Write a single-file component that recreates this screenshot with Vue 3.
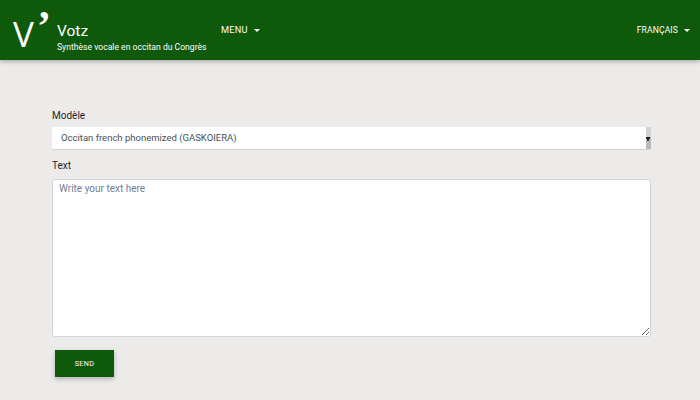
<template>
  <div class="page">
    <header class="topbar">
      <div class="brand">
        <div class="logo">V<span class="apos">’</span></div>
        <div class="brand-text">
          <div class="brand-name">Votz</div>
          <div class="brand-sub">Synthèse vocale en occitan du Congrès</div>
        </div>
      </div>
      <nav class="menu">
        <a class="nav-link">MENU<span class="caret"></span></a>
      </nav>
      <a class="nav-link lang">FRANÇAIS<span class="caret"></span></a>
    </header>

    <main class="content">
      <label class="field-label">Modèle</label>
      <div class="select-box">
        <span class="select-text">{{ model }}</span>
        <div class="scrollbar"><span class="thumb"></span></div>
      </div>
      <label class="field-label second">Text</label>
      <textarea class="text-input" placeholder="Write your text here"></textarea>
      <button class="send">SEND</button>
    </main>
  </div>
</template>

<script setup>
const model = 'Occitan french phonemized (GASKOIERA)'
</script>

<style>
html, body {
  margin: 0;
  background: #edebe9;
}
</style>

<style scoped>
.page {
  width: 700px;
  height: 400px;
  overflow: hidden;
  background: #edebe9;
  font-family: Roboto, "Noto Sans", sans-serif;
  color: #212529;
}

.topbar {
  height: 60px;
  display: flex;
  align-items: flex-start;
  background: #0e5a0a;
  box-shadow: 0 2px 4px rgba(0, 0, 0, 0.25);
  color: #fff;
}

.brand {
  display: flex;
  align-items: flex-start;
  flex-shrink: 0;
  padding-left: 13px;
  width: 208px;
  box-sizing: border-box;
}

.logo {
  flex-shrink: 0;
  font-family: "Open Sans", sans-serif;
  font-size: 35px;
  line-height: 40px;
  margin-top: 14px;
  width: 44px;
  position: relative;
}

.apos {
  position: absolute;
  left: 24px;
  top: -9px;
  font-family: "Liberation Serif", serif;
  font-size: 42px;
  font-weight: 700;
  line-height: 42px;
}

.brand-name {
  font-size: 15.5px;
  line-height: 20px;
  margin-top: 21px;
}

.brand-sub {
  font-size: 8.6px;
  line-height: 12px;
  white-space: nowrap;
}

.menu {
  margin-left: 13px;
}

.nav-link {
  display: flex;
  align-items: center;
  font-size: 9.2px;
  letter-spacing: 0.2px;
  line-height: 12px;
  margin-top: 24px;
}

.lang {
  margin-left: auto;
  margin-right: 10px;
  font-size: 8.6px;
  letter-spacing: 0.1px;
}

.caret {
  width: 0;
  height: 0;
  margin-left: 6px;
  border-top: 3px solid #fff;
  border-left: 3px solid transparent;
  border-right: 3px solid transparent;
}

.content {
  display: flex;
  flex-direction: column;
  align-items: flex-start;
  padding: 49px 49px 0 52px;
}

.field-label {
  font-size: 10px;
  line-height: 14px;
  margin-bottom: 4px;
}

.second {
  margin-top: 9px;
  margin-bottom: 6px;
}

.select-box {
  width: 100%;
  height: 23px;
  display: flex;
  align-items: center;
  justify-content: space-between;
  background: #fff;
  border-bottom: 1px solid #ced4da;
  box-sizing: border-box;
  padding-left: 9px;
}

.select-text {
  font-size: 9.5px;
  color: #495057;
  margin-top: -2px;
}

.scrollbar {
  width: 5px;
  height: 22px;
  background: linear-gradient(#d2d2d2 0 45%, #b9b9b9 45%);
  display: flex;
  align-items: center;
  justify-content: flex-start;
}

.thumb {
  position: relative;
  width: 4px;
  height: 2px;
  background: #222;
}

.thumb::after {
  content: '';
  position: absolute;
  left: 1px;
  top: 2px;
  width: 2px;
  height: 2px;
  background: #333;
}

.text-input {
  display: block;
  width: 100%;
  height: 158px;
  box-sizing: border-box;
  border: 1px solid #ced4da;
  border-radius: 3px;
  background: #fff;
  padding: 3px 6px;
  font-family: inherit;
  font-size: 10px;
  resize: vertical;
  outline: none;
}

.text-input::placeholder {
  color: #6c7f92;
  opacity: 1;
}

.send {
  width: 59px;
  height: 27px;
  margin: 13px 0 0 3px;
  border: none;
  background: #0e5a0a;
  color: #fff;
  font-family: inherit;
  font-size: 7.2px;
  letter-spacing: 0.3px;
  box-shadow: 0 2px 5px rgba(0, 0, 0, 0.25);
}
</style>
